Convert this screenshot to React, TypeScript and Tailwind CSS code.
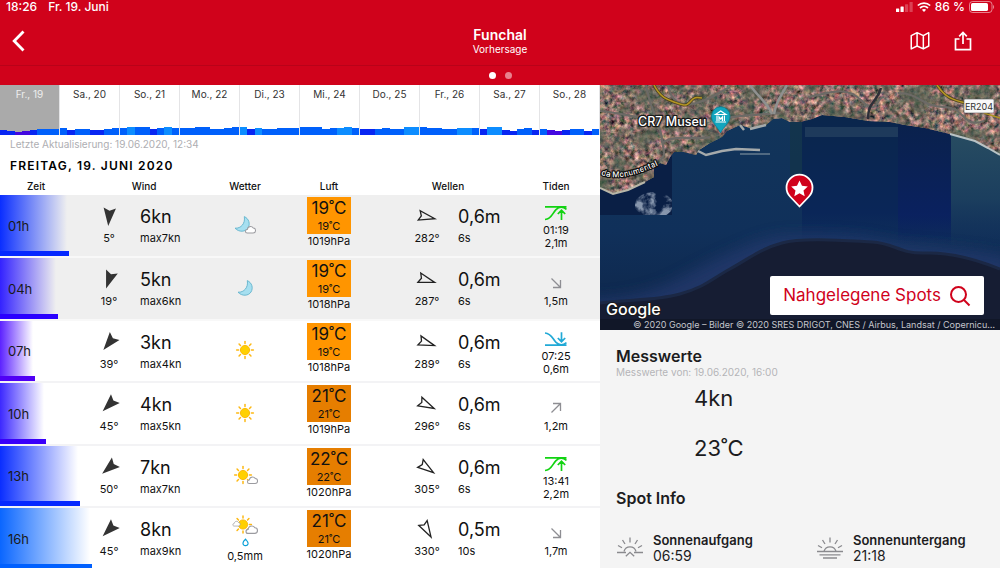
import type { ReactNode } from "react";

const SANS = "font-['Inter','Liberation_Sans',sans-serif]";

/* ---------- data ---------- */

type Shade = "d" | "b" | "l" | "p";
const SHADES: Record<Shade, string> = {
  d: "bg-[#0826f2]",
  b: "bg-[#0060fb]",
  l: "bg-[#0d8dff]",
  p: "bg-[#4308e0]",
};

const DAYS: { label: string; bars: string }[] = [
  { label: "Fr., 19", bars: "d5 d4 p3 p4 d5 b6 b6 b6" },
  { label: "Sa., 20", bars: "b7 d5 b6 b6 d5 d5 b6 b7" },
  { label: "So., 21", bars: "b7 l8 b8 b8 d6 b7 l8 b7" },
  { label: "Mo., 22", bars: "b7 b7 b8 b8 b6 b6 b7 b8" },
  { label: "Di., 23", bars: "l8 d6 l7 b6 b6 b7 b7 b7" },
  { label: "Mi., 24", bars: "b8 b8 b8 b6 b7 l7 l8 b7" },
  { label: "Do., 25", bars: "d6 d6 b6 b7 b6 b6 l8 l8" },
  { label: "Fr., 26", bars: "b8 b7 b7 b6 b6 l7 l7 b7" },
  { label: "Sa., 27", bars: "d6 l8 l8 d5 d4 b6 b7 d5" },
  { label: "So., 28", bars: "b6 p5 p4 d5 b6 b6 d4 b6" },
];

type Weather = "moonCloud" | "moon" | "sun" | "sunCloud" | "sunRain";
type Tide = "high" | "low" | "falling" | "rising";

interface Hour {
  time: string;
  bar: number;
  fade: string;
  solid: string;
  windDir: number;
  wind: string;
  gust: string;
  weather: Weather;
  rain?: string;
  temp: string;
  heat: string;
  pressure: string;
  waveDir: number;
  wave: string;
  period: string;
  tide: Tide;
  tideTime?: string;
  tideHeight: string;
  night?: boolean;
}

const HOURS: Hour[] = [
  { time: "01h", bar: 69, fade: "from-[#0a2eff]", solid: "bg-[#0528ff]", windDir: 5, wind: "6kn", gust: "max7kn", weather: "moonCloud", temp: "19˚C", heat: "bg-[#ff9500]", pressure: "1019hPa", waveDir: 282, wave: "0,6m", period: "6s", tide: "high", tideTime: "01:19", tideHeight: "2,1m", night: true },
  { time: "04h", bar: 58, fade: "from-[#3322ff]", solid: "bg-[#2a00ff]", windDir: 19, wind: "5kn", gust: "max6kn", weather: "moon", temp: "19˚C", heat: "bg-[#ff9500]", pressure: "1018hPa", waveDir: 287, wave: "0,6m", period: "6s", tide: "falling", tideHeight: "1,5m", night: true },
  { time: "07h", bar: 35, fade: "from-[#5c22ff]", solid: "bg-[#5000f5]", windDir: 39, wind: "3kn", gust: "max4kn", weather: "sun", temp: "19˚C", heat: "bg-[#ff9500]", pressure: "1018hPa", waveDir: 289, wave: "0,6m", period: "6s", tide: "low", tideTime: "07:25", tideHeight: "0,6m" },
  { time: "10h", bar: 46, fade: "from-[#3c28ff]", solid: "bg-[#3a00fa]", windDir: 45, wind: "4kn", gust: "max5kn", weather: "sun", temp: "21˚C", heat: "bg-[#e67e00]", pressure: "1019hPa", waveDir: 296, wave: "0,6m", period: "6s", tide: "rising", tideHeight: "1,2m" },
  { time: "13h", bar: 80, fade: "from-[#0a2eff]", solid: "bg-[#0528ff]", windDir: 50, wind: "7kn", gust: "max7kn", weather: "sunCloud", temp: "22˚C", heat: "bg-[#e67e00]", pressure: "1020hPa", waveDir: 305, wave: "0,6m", period: "6s", tide: "high", tideTime: "13:41", tideHeight: "2,2m" },
  { time: "16h", bar: 92, fade: "from-[#0a66ff]", solid: "bg-[#0060ff]", windDir: 45, wind: "8kn", gust: "max9kn", weather: "sunRain", rain: "0,5mm", temp: "21˚C", heat: "bg-[#e67e00]", pressure: "1020hPa", waveDir: 330, wave: "0,5m", period: "10s", tide: "falling", tideHeight: "1,7m" },
];

/* ---------- icons ---------- */

function WindArrow({ deg }: { deg: number }) {
  return (
    <svg width="24" height="24" viewBox="0 0 24 24" aria-hidden="true">
      <path d="M5.8 3 12 5.8 18.2 3 12 21Z" fill="#333" transform={`rotate(${deg} 12 12)`} />
    </svg>
  );
}

function WaveArrow({ deg }: { deg: number }) {
  return (
    <svg width="24" height="24" viewBox="0 0 24 24" aria-hidden="true">
      <path d="M7.2 4 12 6.2 16.8 4 12 20Z" fill="none" stroke="#222" strokeWidth="1.3" strokeLinejoin="miter" transform={`rotate(${deg} 12 12)`} />
    </svg>
  );
}

const RAYS = [0, 45, 90, 135, 180, 225, 270, 315];

function Sun({ cx, cy }: { cx: number; cy: number }) {
  return (
    <g>
      <circle cx={cx} cy={cy} r="4.6" fill="#ffd000" stroke="#fbb400" strokeWidth="0.9" />
      {RAYS.map((a) => (
        <path key={a} d={`M${cx} ${cy - 6.4}V${cy - 8.4}`} stroke="#fdb813" strokeWidth="1.5" strokeLinecap="round" transform={`rotate(${a} ${cx} ${cy})`} />
      ))}
    </g>
  );
}

function Cloud({ x, y, w }: { x: number; y: number; w: number }) {
  return (
    <path
      d="M2.4 7.6C.9 7.6.5 6.4.5 5.7c0-1.2.9-2 2-2C2.8 1.9 4.2.5 6.1.5c1.3 0 2.3.7 2.9 1.7C10.2 2.2 11.5 3.3 11.5 4.9c0 1.6-1.2 2.7-2.7 2.7Z"
      transform={`translate(${x} ${y}) scale(${w / 12})`}
      fill="#fff"
      stroke="#9b9ba0"
      strokeWidth="1.1"
    />
  );
}

function Moon({ x, y }: { x: number; y: number }) {
  return (
    <path
      d="M10.3.6C15 2.7 16.5 8 14 12 11.5 16 5 16.5 1 12.2 7 12.600 11.5 7.5 10.3.6Z"
      transform={`translate(${x} ${y})`}
      fill="#a6dff0"
      stroke="#62b3cc"
      strokeWidth="0.9"
      strokeLinejoin="round"
    />
  );
}

function WeatherIcon({ kind }: { kind: Weather }) {
  if (kind === "sunRain") {
    return (
      <svg width="30" height="32" viewBox="0 0 30 32" role="img" aria-label="Wolkig mit Schauern">
        <Sun cx={13} cy={9.5} />
        <Cloud x={2.5} y={6} w={8} />
        <Cloud x={15.5} y={10.5} w={12.5} />
        <path d="M15.5 24.200c2.300 2.500 2.900 3.400 2.500 4.800-.4 1.200-1.500 1.800-2.600 1.700-1.500-.1-2.600-1.200-2.400-2.700.1-1.200 1-2.500 2.500-3.800Z" fill="#fff" stroke="#0aa0d8" strokeWidth="1.2" />
      </svg>
    );
  }
  return (
    <svg width="30" height="24" viewBox="0 0 30 24" aria-hidden="true">
      {kind === "sun" && <Sun cx={15} cy={11} />}
      {kind === "sunCloud" && (
        <>
          <Sun cx={13} cy={11} />
          <Cloud x={17} y={12.5} w={11} />
        </>
      )}
      {kind === "moon" && <Moon x={7} y={3} />}
      {kind === "moonCloud" && (
        <>
          <Moon x={4} y={2} />
          <Cloud x={15} y={12} w={11} />
        </>
      )}
    </svg>
  );
}

function TideIcon({ kind }: { kind: Tide }) {
  if (kind === "high") {
    return (
      <svg width="24" height="16" viewBox="0 0 24 16" fill="none" stroke="#12d312" strokeWidth="1.7" aria-hidden="true">
        <path d="M1 1.8H22.5M1 14.5C7.5 14.2 8.5 8 12 4.6 15 1.7 19 1.6 22.5 4.4M17.5 15V5.5M13.8 9l3.7-3.7L21.200 9" />
      </svg>
    );
  }
  if (kind === "low") {
    return (
      <svg width="24" height="16" viewBox="0 0 24 16" fill="none" stroke="#21a9d6" strokeWidth="1.7" aria-hidden="true">
        <path d="M1 14.200H22.5M1 2C7.5 2.300 8.5 8 12 11.400 15 14.300 19 14.400 22.500 11.600M17.5 1.300V10.500M13.800 7l3.700 3.700L21.200 7" />
      </svg>
    );
  }
  return (
    <svg width="12" height="12" viewBox="0 0 12 12" fill="none" stroke="#8e8e93" strokeWidth="1.3" aria-hidden="true">
      {kind === "falling" ? <path d="M1.5 1.5 10.3 10.3M10.5 3V10.5H3" /> : <path d="M1.5 10.5 10.3 1.7M3 1.5H10.5V9" />}
    </svg>
  );
}

/* ---------- header ---------- */

function StatusBar() {
  return (
    <div className="flex h-[14px] items-center justify-between pl-[6px] pr-[5px] text-xs font-medium leading-none">
      <div className="flex gap-[11px]">
        <span>18:26</span>
        <span>Fr. 19. Juni</span>
      </div>
      <div className="flex items-center gap-1">
        <svg width="17" height="10" viewBox="0 0 17 10" fill="#fff" aria-hidden="true">
          <rect x="0" y="6.5" width="3.2" height="3.5" rx=".6" />
          <rect x="4.5" y="4.5" width="3.2" height="5.5" rx=".6" />
          <rect x="9" y="2.3" width="3.2" height="7.7" rx=".6" opacity=".25" />
          <rect x="13.5" y="0" width="3.2" height="10" rx=".6" opacity=".25" />
        </svg>
        <svg width="14" height="10" viewBox="0 0 14 10" fill="none" stroke="#fff" strokeWidth="1.7" aria-hidden="true">
          <path d="M.8 3.5C4.3.2 9.7.2 13.2 3.5M3 6C5.3 3.9 8.7 3.9 11 6" />
          <path d="M7 9.9 4.9 7.8C6.1 6.8 7.9 6.8 9.1 7.8Z" fill="#fff" stroke="none" />
        </svg>
        <span>86 %</span>
        <svg width="26" height="12" viewBox="0 0 26 12" aria-hidden="true">
          <rect x=".5" y=".5" width="22.5" height="11" rx="3" fill="none" stroke="#fff" opacity=".5" />
          <rect x="2" y="2" width="17" height="8" rx="1.6" fill="#fff" />
          <path d="M24 4v4c1.5-.5 1.5-3.5 0-4Z" fill="#fff" opacity=".5" />
        </svg>
      </div>
    </div>
  );
}

function Header() {
  return (
    <header className="shrink-0 bg-[#d0021b] text-white">
      <StatusBar />
      <div className="grid h-[52px] grid-cols-3 items-center border-b border-[#b90219] pl-3 pr-7">
        <button type="button" aria-label="Zurück" className="w-[13px] pt-[2px]">
          <svg width="13" height="22" viewBox="0 0 13 22" fill="none" stroke="#fff" strokeWidth="2.8" aria-hidden="true">
            <path d="M11.5 1.500 2.200 11l9.300 9.500" />
          </svg>
        </button>
        <div className="pt-[2px] pl-4 text-center">
          <h1 className="text-sm font-semibold leading-4">Funchal</h1>
          <p className="text-[10px] leading-3">Vorhersage</p>
        </div>
        <div className="flex items-center justify-end gap-6 pt-[2px]">
          <button type="button" aria-label="Karte">
            <svg width="20" height="20" viewBox="0 0 24 24" fill="none" stroke="#fff" strokeWidth="1.8" strokeLinejoin="round" aria-hidden="true">
              <path d="M1.500 5.500v16L8.500 18l7.500 3.500 6.500-3.500V2L16 5.500 8.500 2ZM8.500 2v16M16 5.500v16" />
            </svg>
          </button>
          <button type="button" aria-label="Teilen">
            <svg width="18" height="20" viewBox="0 0 18 20" fill="none" stroke="#fff" strokeWidth="1.7" aria-hidden="true">
              <path d="M5.500 8H1.500V18.700H16.500V8H12.500M9 13V1.800M5.200 5.300 9 1.500l3.800 3.800" />
            </svg>
          </button>
        </div>
      </div>
      <div className="flex h-[19px] items-center justify-center gap-[9px]">
        <span className="size-[7px] rounded-full bg-white" />
        <span className="size-[7px] rounded-full bg-white/50" />
      </div>
    </header>
  );
}

/* ---------- forecast ---------- */

function DayStrip() {
  return (
    <nav aria-label="Tage" className="grid h-[50px] grid-cols-10">
      {DAYS.map((day, i) => (
        <button
          key={day.label}
          type="button"
          aria-current={i === 0 ? "date" : undefined}
          className={`flex flex-col justify-between border-r border-[#e4e4e6] text-center text-[10px] leading-[18px] ${i === 0 ? "bg-[#aaaaaa] text-white/80" : "text-[#333]"}`}
        >
          <span className="w-full">{day.label}</span>
          <span className="flex w-full items-end">
            {day.bars.split(" ").map((b, j) => (
              <span key={j} className={`flex-1 ${SHADES[b[0] as Shade]}`} style={{ height: Number(b[1]) }} />
            ))}
          </span>
        </button>
      ))}
    </nav>
  );
}

function Reading({ icon, dir, value, sub, className }: { icon: ReactNode; dir: string; value: string; sub: string; className: string }) {
  return (
    <div className={`flex gap-1 text-[11px] leading-4 ${className}`}>
      <div className="w-[54px] text-center">
        <div className="flex h-[26px] items-center justify-center">{icon}</div>
        <div>{dir}</div>
      </div>
      <div>
        <div className="text-lg leading-[26px]">{value}</div>
        <div>{sub}</div>
      </div>
    </div>
  );
}

function HourRow({ h }: { h: Hour }) {
  return (
    <tr className={`odd:h-[62px] even:h-[63px] border-b-2 ${h.night ? "border-[#f8f8f8] bg-[#efefef]" : "border-[#f3f3f5] bg-white"}`}>
      <th scope="row" className="relative pt-[2px] pl-2 text-left text-[13px] font-normal text-[#1a1a1a]">
        <span className={`absolute inset-y-0 left-0 bg-linear-to-r ${h.fade} to-transparent`} style={{ width: h.bar - 2 }} />
        <span className={`absolute bottom-0 left-0 h-[5px] ${h.solid}`} style={{ width: h.bar }} />
        <span className="relative">{h.time}</span>
      </th>
      <td className="pt-[9px] align-top">
        <Reading className="ml-[10px]" icon={<WindArrow deg={h.windDir} />} dir={`${h.windDir}°`} value={h.wind} sub={h.gust} />
      </td>
      <td className="text-[11px] leading-3">
        <div className="flex flex-col items-center gap-[3px]">
          <WeatherIcon kind={h.weather} />
          {h.rain && <span>{h.rain}</span>}
        </div>
      </td>
      <td className="pt-[2px] align-top">
        <div className="flex flex-col items-center text-[11px] leading-[14px]">
          <div className={`h-[37px] w-11 text-center ${h.heat}`}>
            <div className="text-[17px] leading-[23px]">{h.temp}</div>
            <div className="leading-3">{h.temp}</div>
          </div>
          <span>{h.pressure}</span>
        </div>
      </td>
      <td className="pt-[9px] align-top">
        <Reading className="ml-4" icon={<WaveArrow deg={h.waveDir} />} dir={`${h.waveDir}°`} value={h.wave} sub={h.period} />
      </td>
      <td className="pt-[10px] align-top">
        <div className="flex flex-col items-center text-[11px]">
          {h.tideTime ? (
            <>
              <TideIcon kind={h.tide} />
              <span className="mt-[3px] leading-[13px]">{h.tideTime}</span>
              <span className="leading-[13px]">{h.tideHeight}</span>
            </>
          ) : (
            <>
              <span className="flex h-[25px] items-end pb-1">
                <TideIcon kind={h.tide} />
              </span>
              <span className="leading-4">{h.tideHeight}</span>
            </>
          )}
        </div>
      </td>
    </tr>
  );
}

function Forecast() {
  return (
    <section className="overflow-hidden bg-white text-[#111]">
      <DayStrip />
      <p className="pl-[10px] text-[10px] leading-[18px] text-[#aeaeb2]">Letzte Aktualisierung: 19.06.2020, 12:34</p>
      <h2 className="pl-[10px] text-xs font-semibold leading-[26px] tracking-widest text-black">FREITAG, 19. JUNI 2020</h2>
      <table className="w-full table-fixed border-collapse">
        <colgroup>
          <col className="w-[72px]" />
          <col className="w-[144px]" />
          <col className="w-[58px]" />
          <col className="w-[110px]" />
          <col className="w-[128px]" />
          <col className="w-[88px]" />
        </colgroup>
        <thead>
          <tr className="h-4 text-[10px] leading-[14px]">
            {["Zeit", "Wind", "Wetter", "Luft", "Wellen", "Tiden"].map((t) => (
              <th key={t} scope="col" className="p-0 align-top font-medium">
                {t}
              </th>
            ))}
          </tr>
        </thead>
        <tbody>
          {HOURS.map((h) => (
            <HourRow key={h.time} h={h} />
          ))}
        </tbody>
      </table>
    </section>
  );
}

/* ---------- map ---------- */

const COAST =
  "M0 0H400V70L388 63 375 56 350 49 325 43 305 40 290 37 268 36 245 32 222 30 212 34 200 37 190 37 182 33 173 34 166 40 150 43 140 40 127 46 122 52 110 58 99 65 96 70 84 67 74 67 70 72 66 80 60 78 54 82 54 92 45 97 28 105 13 109 0 103Z";

function Satellite() {
  return (
    <svg className="absolute inset-0 size-full" viewBox="0 0 400 245" preserveAspectRatio="xMidYMid slice" role="img" aria-label="Satellitenkarte von Funchal">
      <defs>
        <filter id="terrain" x="0" y="0" width="100%" height="100%" colorInterpolationFilters="sRGB">
          <feTurbulence type="fractalNoise" baseFrequency="0.2" numOctaves="5" seed="8" />
          <feColorMatrix values="1.25 0.1 0 0 -0.13  0.7 0.45 0 0 -0.13  0.65 0.25 0.25 0 -0.16  0 0 0 0 1" />
        </filter>
        <filter id="greens" x="0" y="0" width="100%" height="100%" colorInterpolationFilters="sRGB">
          <feTurbulence type="fractalNoise" baseFrequency="0.045" numOctaves="4" seed="21" />
          <feColorMatrix values="0 0 0 0 0.29  0 0 0 0 0.36  0 0 0 0 0.3  0 4 0 0 -1.7" />
        </filter>
        <filter id="foam" x="0" y="0" width="100%" height="100%" colorInterpolationFilters="sRGB">
          <feTurbulence type="fractalNoise" baseFrequency="0.09" numOctaves="4" seed="4" />
          <feColorMatrix values="0 0 0 0 0.7  0 0 0 0 0.75  0 0 0 0 0.82  4 0 0 0 -1.7" />
        </filter>
        <filter id="soft" x="-10%" y="-40%" width="120%" height="180%">
          <feGaussianBlur stdDeviation="7" />
        </filter>
        <linearGradient id="sea" x1="0" y1="0" x2="0" y2="1">
          <stop offset="0" stopColor="#12365a" />
          <stop offset=".6" stopColor="#10305a" />
          <stop offset="1" stopColor="#0e2548" />
        </linearGradient>
        <linearGradient id="bay" x1="0" y1="0" x2="0" y2="1">
          <stop offset="0" stopColor="#0a264c" />
          <stop offset=".75" stopColor="#0a2658" />
          <stop offset="1" stopColor="#0a2658" stopOpacity="0" />
        </linearGradient>
        <linearGradient id="deepBay" x1="0" y1="0" x2="0" y2="1">
          <stop offset="0" stopColor="#0a1e4c" stopOpacity=".6" />
          <stop offset=".75" stopColor="#0a1f62" stopOpacity=".7" />
          <stop offset="1" stopColor="#0a1f62" stopOpacity="0" />
        </linearGradient>
        <linearGradient id="eastSea" x1="0" y1="0" x2="0" y2="1">
          <stop offset="0" stopColor="#294e62" />
          <stop offset=".6" stopColor="#1b3e5e" />
          <stop offset="1" stopColor="#14305a" stopOpacity="0" />
        </linearGradient>
        <clipPath id="land">
          <path d={COAST} />
        </clipPath>
        <clipPath id="surf">
          <ellipse cx="54" cy="120" rx="19" ry="13" />
        </clipPath>
      </defs>
      <rect width="400" height="245" fill="url(#sea)" />
      <rect x="0" y="60" width="72" height="70" fill="#0a1f45" />
      <rect x="190" y="30" width="13" height="60" fill="#13343f" opacity=".5" />
      <rect x="202" y="30" width="149" height="130" fill="url(#bay)" />
      <rect x="298" y="40" width="53" height="120" fill="url(#deepBay)" />
      <rect x="351" y="40" width="49" height="125" fill="url(#eastSea)" />
      <rect x="205" y="42" width="93" height="10" fill="#3d5a70" opacity=".4" />
      <rect x="30" y="104" width="42" height="26" filter="url(#foam)" clipPath="url(#surf)" opacity=".75" />
      <path d="M-10 214C60 212 80 190 120 172S170 150 200 150 260 150 285 156 350 160 410 172V260H-10Z" fill="#253b70" opacity=".7" filter="url(#soft)" />
      <path d="M0 218C30 214 55 216 80 209S110 195 130 184 160 164 182 158 250 156 272 157 300 169 325 168 375 174 400 184V245H0Z" fill="#161d33" />
      <path d="M0 218C30 214 55 216 80 209S110 195 130 184 160 164 182 158 250 156 272 157 300 169 325 168 375 174 400 184" fill="none" stroke="#1b2845" strokeWidth="3" />
      <g clipPath="url(#land)">
        <rect width="400" height="112" fill="#75665f" />
        <rect width="400" height="112" filter="url(#terrain)" />
        <rect width="400" height="112" filter="url(#greens)" opacity=".65" />
      </g>
      <path d="M400 70 388 63 375 56 350 49" fill="none" stroke="#b9c3c5" strokeWidth="2" />
      <path d="M0 103 13 109 28 105 45 97" fill="none" stroke="#b8b6a8" strokeWidth="2" />
      <path d="M98 66 106 70 122 66 136 64 160 65M140 40l4 5M150 44l16-4" fill="none" stroke="#a5aaab" strokeWidth="2.5" />
      <path d="M140 69h30" stroke="#8fa0a8" strokeWidth="2" opacity=".5" />
      <g fill="none" strokeLinejoin="round">
        <path d="M46 0C50 24 60 38 62 54S66 68 60 76M62 58C76 48 94 56 110 52M0 26C24 28 34 34 48 32M68 0C72 22 88 24 112 12L130 2M127 33C140 30 160 30 180 28M208 12C230 8 246 0 262 16S276 12 284 12M298 8C320 8 322 22 344 22S362 44 384 36" stroke="#6c6a66" strokeWidth="2.2" />
        <path d="M150 0C158 12 168 18 172 29M187 0C180 12 176 18 174 29" stroke="#8f9190" strokeWidth="2.5" />
        <path d="M54 0C60 12 66 14 74 17S86 22 90 17 96 12 102 13M337 0C345 12 352 15 366 18" stroke="#4d4320" strokeWidth="3" />
        <path d="M54 0C60 12 66 14 74 17S86 22 90 17 96 12 102 13M337 0C345 12 352 15 366 18M384 28 400 33" stroke="#b39524" strokeWidth="1.6" />
        <path d="M281 3C277 18 268 16 268 34" stroke="#2d2f38" strokeWidth="2.5" />
      </g>
      <g className="font-['Inter','Liberation_Sans',sans-serif]" strokeLinejoin="round" paintOrder="stroke">
        <path id="roadLine" d="M1 90C18 95 32 93 70 75" fill="none" />
        <text fontSize="8" fontWeight="500" fill="#fff" stroke="#111" strokeWidth="2.5">
          <textPath href="#roadLine">da Monumental</textPath>
        </text>
        <text x="38" y="41" fontSize="12.500" fontWeight="500" fill="#fff" stroke="#1a1a1a" strokeWidth="2.5">
          CR7 Museu
        </text>
        <text x="6" y="230" fontSize="16" fontWeight="500" fill="#fff" stroke="#1a1a1a" strokeWidth="2">
          Google
        </text>
      </g>
      <path d="M120.500 48C117 41 111.500 38 111.500 31A9.200 9.200 0 0 1 130 31C130 38 124 41 120.500 48Z" fill="#12a5bd" stroke="#0b7e93" strokeWidth=".8" />
      <path d="M115.500 29.500 120.700 26l5.200 3.500ZM115.500 37h10.500M117 30.500V36M124.400 30.500V36M119 36v-4l1.700 2 1.700-2v4" fill="none" stroke="#fff" strokeWidth="1.2" />
      <rect x="364" y="14" width="30" height="14" rx="1" fill="#f8f8f8" stroke="#555" strokeWidth=".6" />
      <text x="379" y="24.500" fontSize="9" textAnchor="middle" fill="#333" className="font-['Inter','Liberation_Sans',sans-serif]">
        ER204
      </text>
      <path d="M199.500 121.500 190 111.500A13 13 0 1 1 209 111.500Z" fill="#d0021b" stroke="#fff" strokeWidth="1.8" strokeLinejoin="round" />
      <path d="m199.500 95.500 2.500 5.300 5.800.7-4.300 3.900 1.200 5.800-5.200-2.900-5.200 2.900 1.200-5.800-4.300-3.900 5.800-.7Z" fill="#fff" />
    </svg>
  );
}

function MapPanel() {
  return (
    <div className="relative flex h-[245px] flex-col items-end justify-end overflow-hidden">
      <Satellite />
      <button type="button" className="relative mr-4 flex h-[39px] items-center gap-2 rounded-[2px] bg-white px-[13px] text-[17px] text-[#d0021b]">
        Nahgelegene Spots
        <svg width="22" height="22" viewBox="0 0 22 22" fill="none" stroke="#d0021b" strokeWidth="2" aria-hidden="true">
          <circle cx="9.500" cy="9.500" r="7.500" />
          <path d="m15 15 5.500 5.500" />
        </svg>
      </button>
      <p className="relative mt-1 w-full truncate bg-black/20 pl-8 pr-[5px] text-right text-[9px] leading-[11px] text-[#c4c6cc]">
        © 2020 Google – Bilder © 2020 SRES DRIGOT, CNES / Airbus, Landsat / Copernicu…
      </p>
    </div>
  );
}

/* ---------- spot details ---------- */

function SunEvent({ label, time, children }: { label: string; time: string; children: ReactNode }) {
  return (
    <div className="flex items-center gap-[9px]">
      <svg width="28" height="24" viewBox="0 0 28 24" fill="none" stroke="#8a8a8e" strokeWidth="1.3" aria-hidden="true">
        <path d="M8 15.500a6.200 6.200 0 0 1 12 0M14 1.500v5M6.500 4 9 8M21.500 4 19 8M2 9.500l4 2.300M26 9.500l-4 2.300" />
        {children}
      </svg>
      <div className="text-sm leading-4">
        <h3 className="text-[13px] font-semibold">{label}</h3>
        <p>{time}</p>
      </div>
    </div>
  );
}

function SpotPanel() {
  return (
    <section className="flex flex-col overflow-hidden bg-[#f4f4f4] text-[#1c1c1e]">
      <MapPanel />
      <div className="px-4 pt-4">
        <h2 className="text-base font-semibold leading-5">Messwerte</h2>
        <p className="text-[10px] leading-3 text-[#b4b4b8]">Messwerte von: 19.06.2020, 16:00</p>
        <div className="flex flex-col gap-[18px] pl-[78px] pt-1 text-[22px] leading-8">
          <p>4kn</p>
          <p>23˚C</p>
        </div>
        <h2 className="mt-6 text-base font-semibold leading-5">Spot Info</h2>
        <div className="mt-6 grid grid-cols-[200fr_168fr]">
          <SunEvent label="Sonnenaufgang" time="06:59">
            <path d="M1 16.500h9M18 16.500h9M9.800 20.200 14 16.300l4.200 3.900" />
          </SunEvent>
          <SunEvent label="Sonnenuntergang" time="21:18">
            <path d="M1 15.500h26M3.500 18.800h21M7 22h14" />
          </SunEvent>
        </div>
      </div>
    </section>
  );
}

export default function App() {
  return (
    <div className={`flex h-screen flex-col overflow-hidden ${SANS}`}>
      <Header />
      <main className="grid min-h-0 flex-1 grid-cols-[3fr_2fr]">
        <Forecast />
        <SpotPanel />
      </main>
    </div>
  );
}
